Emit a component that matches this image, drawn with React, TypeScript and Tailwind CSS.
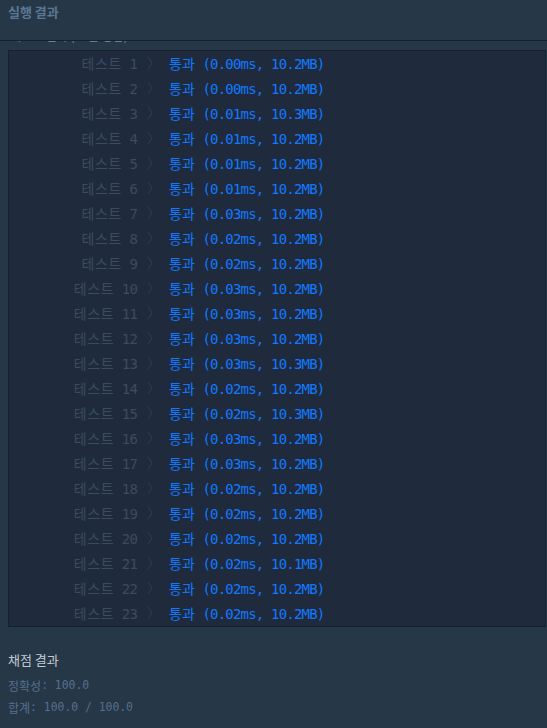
import React from "react";

const ROWS: [string, string][] = [
  ["0.00", "10.2"],
  ["0.00", "10.2"],
  ["0.01", "10.3"],
  ["0.01", "10.2"],
  ["0.01", "10.2"],
  ["0.01", "10.2"],
  ["0.03", "10.2"],
  ["0.02", "10.2"],
  ["0.02", "10.2"],
  ["0.03", "10.2"],
  ["0.03", "10.2"],
  ["0.03", "10.2"],
  ["0.03", "10.3"],
  ["0.02", "10.2"],
  ["0.02", "10.3"],
  ["0.03", "10.2"],
  ["0.03", "10.2"],
  ["0.02", "10.2"],
  ["0.02", "10.2"],
  ["0.02", "10.2"],
  ["0.02", "10.1"],
  ["0.02", "10.2"],
  ["0.02", "10.2"],
];

const KR = "font-['Noto_Sans_CJK_KR',sans-serif]";
const MONO = "font-['DejaVu_Sans_Mono','Noto_Sans_CJK_KR',monospace]";

function Row({ n, ms, mb }: { n: number; ms: string; mb: string }) {
  return (
    <div className="flex h-[25px] items-center whitespace-pre pb-[2px] leading-none">
      <span className="w-[128px] text-right text-[#3b4c5f]">
        <span className={`${KR} text-[14px] tracking-[0.6px]`}>테스트</span>
        <span className={`${MONO} text-[14px] tracking-[-0.87px]`}>{` ${n}`}</span>
      </span>
      <svg className="ml-[10px]" width="6" height="14" viewBox="0 0 6 14" fill="none">
        <polyline points="1,1 5,7 1,13" stroke="#2f3e51" strokeWidth="1" />
      </svg>
      <span className="ml-[16px] text-[#1279ff]">
        <span className={`${KR} text-[14px]`}>통과</span>
        <span className={`${MONO} text-[14px] tracking-[-0.8px]`}>{` (${ms}ms, ${mb}MB)`}</span>
      </span>
    </div>
  );
}

export default function App() {
  return (
    <div className="w-[547px] h-[728px] overflow-hidden bg-[#263747]">
      {/* header */}
      <div className="h-[41px] border-b border-[#172231] px-2 pt-[3px]">
        <div className={`${KR} text-[13px] font-bold leading-[17px] text-[#5b7794]`}>실행 결과</div>
      </div>

      {/* scrolled output, top line mostly out of view */}
      <div className="h-[9px] overflow-hidden pl-[10px]">
        <div className={`${KR} -mt-[12px] text-[12px] leading-[14px] text-[#7b8ea2]`}>테스트 결과 (~~는 정답)</div>
      </div>
      <div className="ml-2 mr-[1px] border border-[#18222f] bg-[#1f2a3c]">
        {ROWS.map(([ms, mb], i) => (
          <Row key={i} n={i + 1} ms={ms} mb={mb} />
        ))}
      </div>

      {/* grading */}
      <div className="px-2 pt-[22px]">
        <div className={`${KR} flex h-[22px] items-center text-[13px] text-[#c2cad3]`}>채점 결과</div>
        <div className="mt-[4px] flex h-[22px] items-center whitespace-pre text-[#55708b]">
          <span className={`${KR} text-[12px]`}>정확성</span>
          <span className={`${MONO} text-[11.4px]`}>: 100.0</span>
        </div>
        <div className="flex h-[22px] items-center whitespace-pre text-[#55708b]">
          <span className={`${KR} text-[12px]`}>합계</span>
          <span className={`${MONO} text-[11.4px]`}>: 100.0 / 100.0</span>
        </div>
      </div>
    </div>
  );
}
